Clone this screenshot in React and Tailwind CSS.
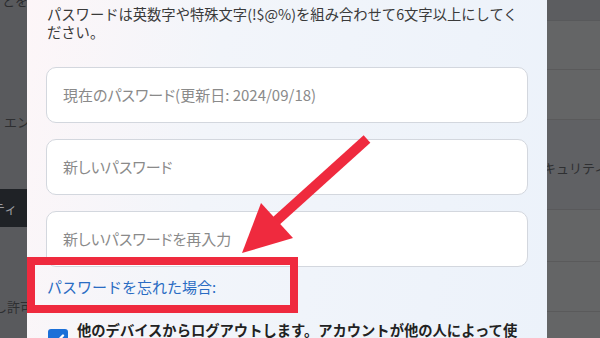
import React from "react";

const jp = "font-['Noto_Sans_CJK_JP','Noto_Sans',sans-serif]";

function Check() {
  return (
    <svg viewBox="0 0 20 20" className="w-[20px] h-[20px]">
      <path d="M5 10.5l3.2 3.2L15 6.5" fill="none" stroke="#fff" strokeWidth="2.4" strokeLinecap="round" strokeLinejoin="round" />
    </svg>
  );
}

export default function App() {
  return (
    <div className={`relative w-[600px] h-[338px] overflow-hidden flex ${jp}`}>
      {/* left backdrop */}
      <div className="w-[27px] shrink-0 bg-[#595a5d] flex flex-col overflow-hidden text-[13px] text-[#2a2b2d]">
        <div className="h-[8px] leading-[8px] -mt-[3px] whitespace-nowrap pl-[2px]">とを</div>
        <div className="h-[107px]" />
        <div className="h-[20px] leading-[20px] whitespace-nowrap pl-[4px] text-[#2e2f31]">エンド</div>
        <div className="h-[57px]" />
        <div className="h-[38px] bg-[#1f2226] flex items-center whitespace-nowrap -ml-[8px] text-[#9a9ca0]">ティ</div>
        <div className="h-[70px]" />
        <div className="h-[20px] leading-[20px] whitespace-nowrap -ml-[6px] text-[#2e2f31]">し許可</div>
      </div>

      {/* modal */}
      <div className="w-[520px] shrink-0 bg-[linear-gradient(100deg,#fdf6f8_0%,#f2f5fa_35%,#ecf2fa_100%)] pt-[5px] px-[19px]">
        <div className="pl-[1px] text-[14.3px] leading-[18px] text-[#3a3a3a] whitespace-nowrap">
          <div>パスワードは英数字や特殊文字(!$@%)を組み合わせて6文字以上にしてく</div>
          <div>ださい。</div>
        </div>
        <div className="mt-[26px] flex flex-col gap-[16px]">
          {["現在のパスワード(更新日: 2024/09/18)", "新しいパスワード", "新しいパスワードを再入力"].map((t) => (
            <div
              key={t}
              className="h-[56px] rounded-[10px] border border-[#d3d7de] bg-white px-[16px] flex items-center text-[15px] text-[#8a8a8a] [font-feature-settings:'palt'] whitespace-nowrap"
            >
              {t}
            </div>
          ))}
        </div>
        <div className="mt-[10px] pl-[1px] text-[15px] leading-[20px] text-[#2a6cc3] whitespace-nowrap">
          パスワードを忘れた場合:
        </div>
        <div className="mt-[22px] flex items-start gap-[9px] pl-[2px]">
          <div className="mt-[10px] w-[20px] h-[20px] rounded-[3px] bg-[#1b6fd8] flex items-center justify-center shrink-0">
            <Check />
          </div>
          <div className="text-[14.3px] leading-[22px] font-bold text-[#222] whitespace-nowrap">
            他のデバイスからログアウトします。アカウントが他の人によって使
          </div>
        </div>
      </div>

      {/* right backdrop */}
      <div className="flex-1 bg-[#646566] flex flex-col overflow-hidden text-[13px] text-[#2f3032]">
        <div className="h-[21px] bg-[#5c5d60] border-b border-[#58595b]" />
        <div className="h-[49px] border-b border-[#5a5a5b]" />
        <div className="h-[50px] border-b border-[#5a5a5b]" />
        <div className="h-[90px] bg-[#606164] border-b border-[#59595b] flex items-center whitespace-nowrap -ml-[4px] pt-[6px]">
          キュリティ
        </div>
        <div className="h-[52px] border-b border-[#5a5a5b]" />
        <div className="h-[50px] border-b border-[#5a5a5b]" />
        <div className="flex-1" />
      </div>

      {/* red highlight box */}
      <div className="absolute left-[27px] top-[257px] w-[271px] h-[56px] border-[8px] border-[#ef2a3e]" />

      {/* arrow */}
      <svg className="absolute inset-0 w-[600px] h-[338px] pointer-events-none" viewBox="0 0 600 338">
        <line x1="367" y1="139" x2="275" y2="222" stroke="#ef2a3e" strokeWidth="10" />
        <polygon points="261,203 293,238 242,253" fill="#ef2a3e" />
      </svg>
    </div>
  );
}
